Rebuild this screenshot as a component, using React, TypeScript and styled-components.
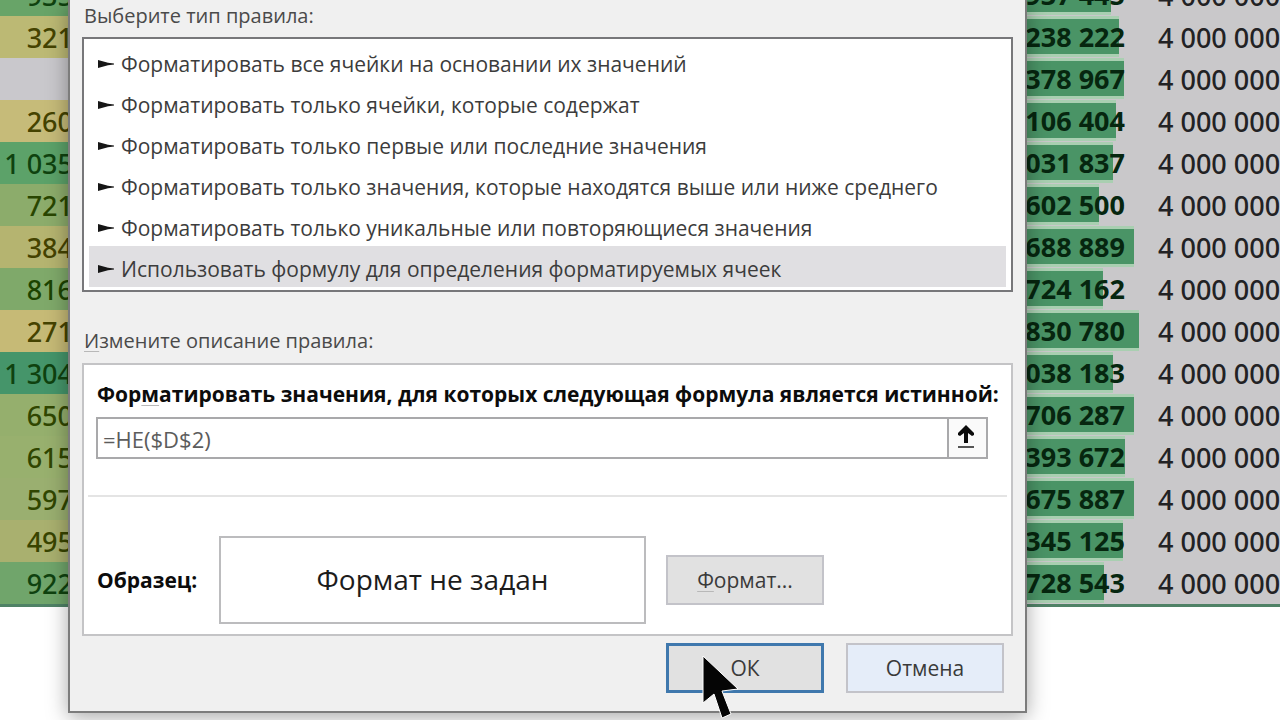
import React from "react";
import styled, { createGlobalStyle } from "styled-components";

const GlobalStyle = createGlobalStyle`
  *, *::before, *::after { box-sizing: border-box; }
  html, body { margin: 0; padding: 0; background: #fff; }
  body { overflow: hidden; font-family: "Open Sans", "Noto Sans", sans-serif; }
  button, input { font: inherit; }
`;

const Desktop = styled.main`
  position: relative;
  min-height: 100vh;
  overflow: hidden;
`;

const Sheet = styled.table`
  width: 100%;
  margin-top: -26px;
  border-collapse: collapse;
  table-layout: fixed;
  border-bottom: 3px solid #4f8266;
  font-family: "Noto Sans", sans-serif;
  font-size: 27px;
  line-height: 36px;
  white-space: nowrap;
  background: #c9c8ca;
`;

const ScaleCell = styled.td<{ $fill: string; $ink: string }>`
  height: 42px;
  padding: 2px 7px 0 0;
  background: ${(p) => p.$fill};
  color: ${(p) => p.$ink};
  text-align: right;
  font-weight: 500;
`;

const BarCell = styled.td`
  height: 42px;
  padding: 0;
  font-weight: 700;
  color: #06260f;
`;

const Bar = styled.div<{ $length: number }>`
  height: 42px;
  padding: 3px 26px 0 0;
  text-align: right;
  background:
    linear-gradient(#4a9466, #4a9466) 0 3px / ${(p) => p.$length}px 35px no-repeat,
    linear-gradient(#a9cfb1, #a9cfb1) 0 0 / ${(p) => p.$length}px 41px no-repeat;
`;

const PlanCell = styled.td`
  height: 42px;
  padding: 2px 0 0 7px;
  color: #222224;
  font-weight: 500;
`;

const Dialog = styled.section`
  position: absolute;
  top: 0;
  left: 68px;
  right: 253px;
  padding: 2px 12px 18px;
  border: 2px solid #7c7c7c;
  border-top: 0;
  background: #f0f0f0;
  color: #3c3c3c;
  font-size: 21px;
  line-height: 28px;
  box-shadow: 0 4px 20px rgba(0, 0, 0, 0.35);
`;

const Caption = styled.h2`
  margin: 0;
  padding-left: 2px;
  font-size: 20px;
  line-height: 28px;
  font-weight: 400;
  color: #4a4a4a;
`;

const AccessKey = styled.u`
  text-decoration-color: #b8b8b8;
  text-decoration-thickness: 1px;
  text-underline-offset: 3px;
`;

const RuleList = styled.ul`
  margin: 7px 0 35px;
  padding: 2px 5px 3px;
  border: 2px solid #77777a;
  background: #fff;
  list-style: none;
`;

const Rule = styled.li<{ $selected: boolean }>`
  display: flex;
  align-items: center;
  gap: 6px;
  height: 41px;
  padding: 5px 0 0 9px;
  white-space: nowrap;
  background: ${(p) => (p.$selected ? "#e0dfe2" : "transparent")};
`;

const Panel = styled.div`
  margin-top: 8px;
  padding: 14px 4px 10px;
  border: 2px solid #c4c4c6;
  background: #fff;
`;

const FormulaLabel = styled.label`
  display: block;
  padding-left: 9px;
  font-weight: 700;
  color: #0c0c0c;
  line-height: 30px;
  white-space: nowrap;
`;

const FormulaBox = styled.div`
  display: flex;
  height: 42px;
  margin: 8px 19px 0 8px;
  border: 2px solid #a9a9ab;
`;

const FormulaInput = styled.input`
  flex: 1;
  min-width: 0;
  padding: 2px 5px 0;
  border: 0;
  outline: 0;
  background: #fff;
  color: #5c5c5c;
  font-size: 22px;
`;

const CollapseButton = styled.button`
  display: grid;
  place-items: center;
  width: 39px;
  padding: 0 3px 4px 0;
  border: 0;
  border-left: 2px solid #a9a9ab;
  background: #fafafa;
`;

const Divider = styled.hr`
  height: 2px;
  margin: 36px 0 39px;
  border: 0;
  background: #e4e4e4;
`;

const SampleRow = styled.div`
  display: flex;
  align-items: center;
  gap: 20px;
  padding-left: 9px;
`;

const SampleLabel = styled.span`
  width: 102px;
  font-weight: 700;
  color: #0c0c0c;
`;

const Sample = styled.output`
  flex: 0 0 427px;
  height: 88px;
  border: 2px solid #bcbcbe;
  font-size: 28px;
  line-height: 82px;
  text-align: center;
  color: #1c1c1c;
`;

const PushButton = styled.button<{ $tone: "plain" | "primary" | "hover" }>`
  width: 158px;
  height: 50px;
  padding: 0;
  border: ${(p) => (p.$tone === "primary" ? "3px solid #3f78ad" : "2px solid #c3c3c9")};
  background: ${(p) => (p.$tone === "hover" ? "#e5edf9" : "#e1e1e1")};
  color: #3a3a3a;
`;

const Actions = styled.footer`
  display: flex;
  justify-content: flex-end;
  gap: 22px;
  margin-top: 7px;
  padding-right: 9px;
`;

const Cursor = styled.svg`
  position: absolute;
  left: 700px;
  top: 652px;
`;

const dark = "#0f420f";
const olive = "#454300";

const rows = [
  { scale: "935", fill: "#68a468", ink: dark, sum: "937 445", bar: 91 },
  { scale: "321", fill: "#bcb974", ink: olive, sum: "238 222", bar: 99 },
  { scale: "", fill: "#c9c8cc", ink: olive, sum: "378 967", bar: 104 },
  { scale: "260", fill: "#c6bb79", ink: olive, sum: "106 404", bar: 96 },
  { scale: "1 035", fill: "#5ca269", ink: dark, sum: "031 837", bar: 93 },
  { scale: "721", fill: "#8cac6b", ink: "#294600", sum: "602 500", bar: 79 },
  { scale: "384", fill: "#b5b470", ink: olive, sum: "688 889", bar: 114 },
  { scale: "816", fill: "#7fa96a", ink: "#1c4400", sum: "724 162", bar: 83 },
  { scale: "271", fill: "#c6ba76", ink: olive, sum: "830 780", bar: 119 },
  { scale: "1 304", fill: "#45956a", ink: dark, sum: "038 183", bar: 93 },
  { scale: "650", fill: "#95af6d", ink: "#304600", sum: "706 287", bar: 114 },
  { scale: "615", fill: "#98b06e", ink: "#304600", sum: "393 672", bar: 105 },
  { scale: "597", fill: "#9aaf70", ink: "#304600", sum: "675 887", bar: 114 },
  { scale: "495", fill: "#a9b06f", ink: "#384400", sum: "345 125", bar: 103 },
  { scale: "922", fill: "#70a56b", ink: dark, sum: "728 543", bar: 84 },
];

const rules = [
  "Форматировать все ячейки на основании их значений",
  "Форматировать только ячейки, которые содержат",
  "Форматировать только первые или последние значения",
  "Форматировать только значения, которые находятся выше или ниже среднего",
  "Форматировать только уникальные или повторяющиеся значения",
  "Использовать формулу для определения форматируемых ячеек",
];

const Marker = () => (
  <svg width="17" height="10" viewBox="0 0 17 10" aria-hidden="true">
    <path d="M0 1 L10 3.8 L16 4.4 V5.6 L10 6.2 L0 9 Z" fill="#161616" />
  </svg>
);

export default function App() {
  return (
    <Desktop>
      <GlobalStyle />
      <Sheet>
        <colgroup>
          <col style={{ width: 80 }} />
          <col />
          <col style={{ width: 131 }} />
          <col style={{ width: 129 }} />
        </colgroup>
        <tbody>
          {rows.map((row) => (
            <tr key={row.sum}>
              <ScaleCell $fill={row.fill} $ink={row.ink}>{row.scale}</ScaleCell>
              <td />
              <BarCell><Bar $length={row.bar}>{row.sum}</Bar></BarCell>
              <PlanCell>4 000 000</PlanCell>
            </tr>
          ))}
        </tbody>
      </Sheet>

      <Dialog role="dialog" aria-label="Изменение правила форматирования">
        <Caption>Выберите тип правила:</Caption>
        <RuleList role="listbox">
          {rules.map((text, i) => (
            <Rule key={text} role="option" aria-selected={i === 5} $selected={i === 5}>
              <Marker />
              {text}
            </Rule>
          ))}
        </RuleList>

        <Caption><AccessKey>И</AccessKey>змените описание правила:</Caption>
        <Panel>
          <FormulaLabel htmlFor="formula">
            Фор<AccessKey>м</AccessKey>атировать значения, для которых следующая формула является истинной:
          </FormulaLabel>
          <FormulaBox>
            <FormulaInput id="formula" defaultValue="=НЕ($D$2)" />
            <CollapseButton type="button" aria-label="Свернуть диалоговое окно">
              <svg width="20" height="26" viewBox="0 0 20 26" aria-hidden="true">
                <path d="M10 2 L18 10 V12 L16 13 L12 10 V20 H8 V10 L4 13 L2 12 V10 Z" fill="#0c0c0c" />
                <path d="M2 24 H18" stroke="#555" strokeWidth="2" />
              </svg>
            </CollapseButton>
          </FormulaBox>
          <Divider />
          <SampleRow>
            <SampleLabel>Образец:</SampleLabel>
            <Sample>Формат не задан</Sample>
            <PushButton type="button" $tone="plain"><AccessKey>Ф</AccessKey>ормат...</PushButton>
          </SampleRow>
        </Panel>
        <Actions>
          <PushButton type="button" $tone="primary">ОК</PushButton>
          <PushButton type="button" $tone="hover">Отмена</PushButton>
        </Actions>
      </Dialog>

      <Cursor width="42" height="68" viewBox="0 0 42 68" aria-hidden="true">
        <path
          d="M3 4 V51 L14 42 L22 66 L31 62 L22 39 L38 37 Z"
          fill="#050505"
          stroke="#fff"
          strokeWidth="1"
        />
      </Cursor>
    </Desktop>
  );
}
